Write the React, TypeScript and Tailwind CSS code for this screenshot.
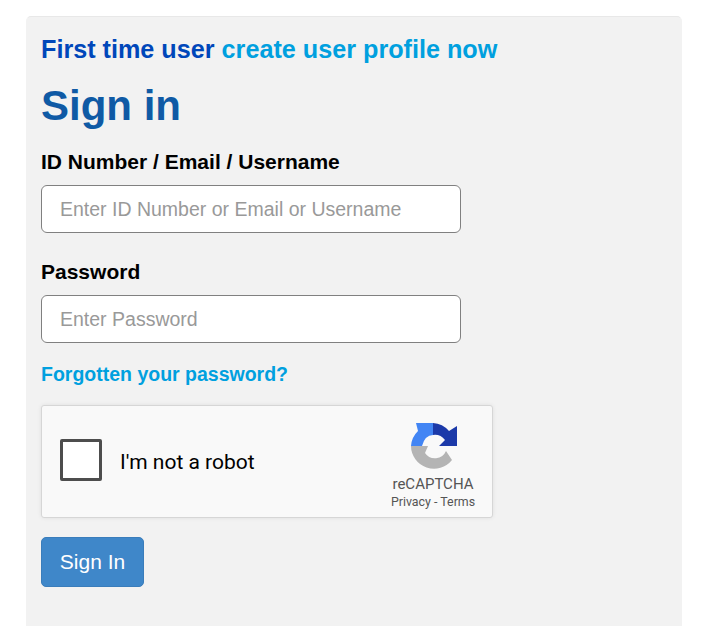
const arial = { fontFamily: '"Liberation Sans", Arial, sans-serif' };

function RecaptchaLogo() {
  return (
    <svg width="46" height="46" viewBox="0 0 46 46" className="block">
      <path d="M0 23 H17 L14 30 A12 12 0 0 0 35 28 L41 37 A23 23 0 0 1 0 23 Z" fill="#b4b4b4" />
      <path d="M0 23 A23 23 0 0 1 7 8 L5 0 H22 V12 Q14 12 11 23 Z" fill="#4285f4" />
      <path d="M22 0 A23 23 0 0 1 38 8 L46 3 V23 H28 L34 17 A13 13 0 0 0 22 12 Z" fill="#1c3aa9" />
    </svg>
  );
}

function Field({ label, placeholder, type }: { label: string; placeholder: string; type: string }) {
  return (
    <div className="mb-[25px]">
      <label className="block text-[21px] leading-[28px] font-bold text-black mb-[9px]">{label}</label>
      <input
        type={type}
        placeholder={placeholder}
        className="block w-[420px] h-[48px] px-[18px] text-[19.5px] bg-white border border-[#808080] rounded-[6px] outline-none placeholder:text-[#999999]"
      />
    </div>
  );
}

export default function App() {
  return (
    <div className="h-screen overflow-hidden bg-white pt-[16px] pl-[26px] pr-[40px]" style={arial}>
      <div className="h-[640px] bg-[#f2f2f2] border border-[#f2f2f2] border-t-[#e8e8e8] rounded-[5px] pl-[14px] pt-[15px]">
        <p className="text-[25.2px] leading-[34px] font-bold text-[#0047ba]">
          First time user <a className="text-[#00a0df]">create user profile now</a>
        </p>
        <h1 className="text-[42px] leading-[46px] font-bold text-[#0f5aa5] mt-[17px] mb-[19px]">Sign in</h1>
        <Field label="ID Number / Email / Username" placeholder="Enter ID Number or Email or Username" type="text" />
        <Field label="Password" placeholder="Enter Password" type="password" />
        <a className="block text-[19.5px] leading-[28px] font-bold text-[#00a0df] -mt-[8px]">Forgotten your password?</a>
        <div
          className="mt-[17px] w-[452px] h-[113px] flex items-center bg-[#f9f9f9] border border-[#d6d6d6] rounded-[3px] shadow-[0_0_4px_rgba(0,0,0,0.08)]"
          style={{ fontFamily: "Roboto, sans-serif" }}
        >
          <div className="ml-[18px] mb-[4px] w-[42px] h-[42px] bg-white border-[3px] border-[#4d4d4d] rounded-[2px]" />
          <span className="ml-[18px] mt-[2px] text-[21px] text-black">I'm not a robot</span>
          <div className="ml-auto mr-[16px] w-[86px] flex flex-col items-center text-[#555555] mt-[10px]">
            <div className="ml-[1px]">
              <RecaptchaLogo />
            </div>
            <span className="text-[15px] leading-[18px] mt-[6px]">reCAPTCHA</span>
            <span className="text-[12.4px] leading-[16px] mt-[1px] whitespace-nowrap">Privacy - Terms</span>
          </div>
        </div>
        <button className="mt-[19px] block w-[103px] h-[50px] bg-[#3f87c9] border border-[#3a7dbb] rounded-[5px] text-white text-[21px]">
          Sign In
        </button>
      </div>
    </div>
  );
}
